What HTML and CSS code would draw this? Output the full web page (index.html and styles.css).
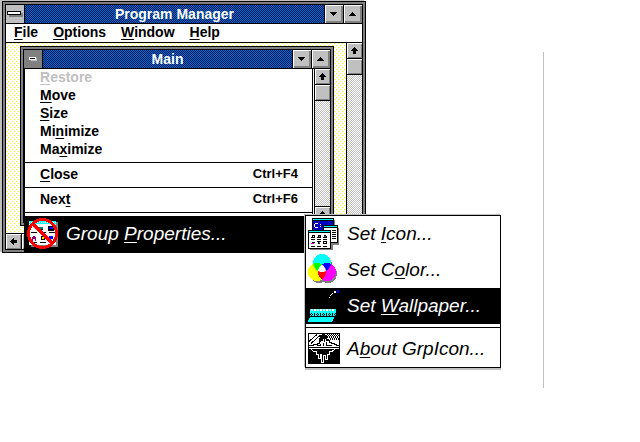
FILE: index.html
```
<!DOCTYPE html>
<html lang="en">
<head>
<meta charset="utf-8">
<title>Program Manager</title>
<link rel="stylesheet" href="styles.css">
</head>
<body>
<main class="desktop">
  <section class="window program-manager" aria-label="Program Manager">
    <div class="window-body">
      <header class="titlebar">
        <button class="control-box" aria-label="Control menu"><svg width="16" height="6" viewBox="0 0 16 6"><path fill="#808080" d="M2 2h14v4H2z"/><path d="M0 0h14v4H0z"/><path fill="#fff" d="M1 1h12v2H1z"/></svg></button>
        <h1 class="title">Program Manager</h1>
        <button class="size-button" aria-label="Minimize"><svg width="8" height="4" viewBox="0 0 8 4"><path d="M0 0h7v1H6v1H5v1H4v1H3V3H2V2H1V1H0z"/></svg></button>
        <button class="size-button" aria-label="Maximize"><svg width="8" height="4" viewBox="0 0 8 4"><path d="M0 4h7V3H6V2H5V1H4V0H3v1H2v1H1v1H0z"/></svg></button>
      </header>
      <nav class="menubar">
        <button><span><u>F</u>ile</span></button>
        <button><span><u>O</u>ptions</span></button>
        <button><span><u>W</u>indow</span></button>
        <button><span><u>H</u>elp</span></button>
      </nav>
      <div class="client">
        <div class="workspace">
          <section class="window group" aria-label="Main">
            <div class="window-body">
              <header class="titlebar">
                <button class="control-box pressed" aria-label="Group control menu"><svg width="8" height="4" viewBox="0 0 8 4"><path fill="#c0c0c0" d="M2 1h6v3H2z"/><path fill="#fff" d="M0 0h7v3H0z"/><path d="M1 1h5v1H1z"/></svg></button>
                <h2 class="title">Main</h2>
                <button class="size-button" aria-label="Minimize group"><svg width="8" height="4" viewBox="0 0 8 4"><path d="M0 0h7v1H6v1H5v1H4v1H3V3H2V2H1V1H0z"/></svg></button>
                <button class="size-button" aria-label="Maximize group"><svg width="8" height="4" viewBox="0 0 8 4"><path d="M0 4h7V3H6V2H5V1H4V0H3v1H2v1H1v1H0z"/></svg></button>
              </header>
              <div class="client">
                <div class="group-area"></div>
                <div class="scrollbar">
                  <button aria-label="Scroll group up"><svg width="7" height="7" viewBox="0 0 7 7"><path d="M3 0h1v1h1v1h1v1h1v1H5v3H2V4H0V3h1V2h1V1h1z"/></svg></button>
                  <button class="thumb" aria-label="Group scroll position"></button>
                  <button class="end" aria-label="Scroll group down"><svg width="7" height="7" viewBox="0 0 7 7"><path d="M3 0h1v1h1v1h1v1h1v1H5v3H2V4H0V3h1V2h1V1h1z"/></svg></button>
                </div>
                <div class="menu system-menu">
                  <button class="item" disabled><span><u>R</u>estore</span></button>
                  <button class="item"><span><u>M</u>ove</span></button>
                  <button class="item"><span><u>S</u>ize</span></button>
                  <button class="item"><span>Mi<u>n</u>imize</span></button>
                  <button class="item"><span>Ma<u>x</u>imize</span></button>
                  <hr>
                  <button class="item"><span><u>C</u>lose</span><kbd>Ctrl+F4</kbd></button>
                  <hr>
                  <button class="item"><span>Nex<u>t</u></span><kbd>Ctrl+F6</kbd></button>
                  <hr>
                  <button class="picture-item selected">
                    <svg width="32" height="32" viewBox="0 0 32 32">
                      <path fill="#808080" d="M4 4h27v25H4z"/>
                      <path fill="#fff" d="M2 3h27v24H2z"/>
                      <path fill="#00ffff" d="M2 3h27v3H2z"/>
                      <path stroke="#fff" stroke-dasharray="1 1" d="M2 4.500h27"/>
                      <path d="M13 9h3v3h-4v-1h1zM21 8h6v5h-6zM4 14h6v1H4zM13 14h6v1h-6zM22 14h6v1h-6zM4 24h6v1H4zM13 24h6v1h-6zM22 24h6v1h-6z"/>
                      <path fill="#008080" d="M12 9h4v2h-4z"/>
                      <path fill="#0000ff" d="M22 9h4v2h-4zM22 18h4v3h-4z"/>
                      <path fill="#800080" d="M6 18h2v1h1v4H8v-2H6v2H5v-4h1z"/>
                      <path d="M14 18h3v1h1v3h-4z"/>
                      <path fill="#ffff00" d="M15 19h2v2h-2z"/>
                      <g fill="none" stroke="#f00" stroke-width="3"><circle cx="15.500" cy="15.500" r="14"/><path d="M5.500 5.500l20 20"/></g>
                    </svg>
                    <span>Group <u>P</u>roperties...</span>
                  </button>
                  <div class="menu submenu">
                    <button class="picture-item">
                      <svg width="32" height="32" viewBox="0 0 32 32">
                        <path fill="#808080" d="M6 2h21v8H6zM17 10h14v17H17zM2 15h23v17H2z"/>
                        <path d="M4 0h22v14H4z"/><path fill="#0000c0" d="M5 3h20v11H5z"/><path fill="#00ffff" d="M5 1h20v1H5z"/>
                        <path fill="#fff" d="M7 5h3v1H7v3h3v1H7V9H6V6h1zM12 6h1v1h-1zM12 8h1v1h-1z"/>
                        <path d="M15 7h15v18H15z"/><path fill="#fff" d="M16 10h13v14H16z"/><path fill="#00ffff" d="M16 8h13v1H16z"/>
                        <path d="M24 12h4v1h-4zM18 12h5v1h-5zM24 14h4v1h-4zM24 16h4v1h-4zM24 18h4v1h-4zM24 20h4v1h-4z"/>
                        <path d="M0 12h23v19H0z"/><path fill="#fff" d="M1 15h21v15H1z"/><path fill="#00ffff" d="M1 13h21v1H1z"/>
                        <path d="M4 17h3v3H3v-1h1zM10 17h3v3H9v-1h1zM16 17h2v1h1v2h-4v-1h1zM3 21h4v1H3zM9 21h4v1H9zM15 21h4v1h-4zM4 24h3v1H4zM9 23h4v1H9zM10 24h2v2h-2zM15 23h4v3h-4zM3 28h4v1H3zM9 28h4v1H9zM15 28h4v1h-4z"/>
                        <path fill="#fff" d="M5 18h1v1H5zM16 24h2v1h-2z"/><path fill="#808080" d="M11 18h1v1h-1zM11 24h1v1h-1z"/><path fill="#008080" d="M16 18h2v1h-2z"/><path fill="#c000c0" d="M3 25h3v1H3z"/>
                      </svg>
                      <span>Set <u>I</u>con...</span>
                    </button>
                    <button class="picture-item">
                      <svg width="32" height="32" viewBox="0 0 32 32">
                        <defs>
                          <clipPath id="cyan-disc"><circle cx="14" cy="9" r="9"/></clipPath>
                          <clipPath id="yellow-disc"><circle cx="9" cy="18" r="9"/></clipPath>
                        </defs>
                        <g fill="#808080"><circle cx="15" cy="11" r="9"/><circle cx="11" cy="20" r="9"/><circle cx="20" cy="20" r="9"/></g>
                        <circle fill="#00ffff" cx="14" cy="9" r="9"/>
                        <circle fill="#ffff00" cx="9" cy="18" r="9"/>
                        <circle fill="#ff00ff" cx="19" cy="18" r="9"/>
                        <g clip-path="url(#cyan-disc)"><circle fill="#00ff00" cx="9" cy="18" r="9"/><circle fill="#0000ff" cx="19" cy="18" r="9"/></g>
                        <g clip-path="url(#yellow-disc)"><circle fill="#ff0000" cx="19" cy="18" r="9"/><g clip-path="url(#cyan-disc)"><circle fill="#fff" cx="19" cy="18" r="9"/></g></g>
                        <path fill="#fff" d="M12 12h4v2h1v3h-1v1h-4v-1h-1v-3h1z"/>
                      </svg>
                      <span>Set C<u>o</u>lor...</span>
                    </button>
                    <button class="picture-item selected">
                      <svg width="32" height="32" viewBox="0 0 32 32">
                        <path fill="#0000ff" d="M29 0h2v3h-2z"/>
                        <path fill="#fff" d="M26 1h2v2h-2zM24 3h1v1h-1zM23 4h1v1h-1zM22 5h1v1h-1zM21 7h1v1h-1z"/>
                        <path fill="#00ffff" d="M2 19h26v8H2zM2 27h24v2h-1v2h-1v1H0v-2h1v-2h1z"/>
                        <path stroke="#fff" stroke-width="2" stroke-dasharray="2 1" d="M3 20h24"/>
                        <path stroke="#000" stroke-dasharray="1 2" d="M3 23.500h25M3 25.500h25"/>
                        <path stroke="#000" stroke-dasharray="1 1" d="M2 24.500h26"/>
                        <path stroke="#000" d="M2 26.500h26"/>
                      </svg>
                      <span>Set <u>W</u>allpaper...</span>
                    </button>
                    <hr>
                    <button class="picture-item">
                      <svg width="32" height="32" viewBox="0 0 32 32">
                        <path d="M0 0h32v31H0z"/>
                        <path fill="#fff" d="M1 1h30v13H1z"/>
                        <path stroke="#000" stroke-dasharray="1 1" d="M18 2.500h13M19 4.500h12M22 6.500h9"/>
                        <path stroke="#000" stroke-dasharray="1 1" stroke-dashoffset="1" d="M18 1.500h13M18 3.500h13M21 5.500h10"/>
                        <path fill="none" stroke="#000" d="M1 8.500L9 1.500M3 10.500L12 2.500"/>
                        <path d="M14 0h3v2h2v4h2v2h-3V6h-1v3h-1V6h-1v2h-2v1h-2V5h1V2h2z"/>
                        <path fill="none" stroke="#000" d="M1 12.500h4v-1h4v-1h2V7.500M21 6.500v3h2v1h3v1h2v1h3M9 12.500h3v-2M15.500 13v-3M18.500 9v3h5"/>
                        <path fill="#fff" d="M1 15h30v1H1z"/>
                        <path fill="none" stroke="#fff" d="M3 16.500l3 2h2v3h2v4h2v-4h1v8h2v-7h2v4h2v-5h2v-3h3l4-3"/>
                      </svg>
                      <span>A<u>b</u>out GrpIcon...</span>
                    </button>
                  </div>
                </div>
              </div>
            </div>
          </section>
        </div>
        <div class="scrollbar">
          <button aria-label="Scroll up"><svg width="7" height="7" viewBox="0 0 7 7"><path d="M3 0h1v1h1v1h1v1h1v1H5v3H2V4H0V3h1V2h1V1h1z"/></svg></button>
          <button class="thumb" aria-label="Scroll position"></button>
        </div>
      </div>
      <div class="scrollbar horizontal">
        <button aria-label="Scroll left"><svg width="7" height="7" viewBox="0 0 7 7"><path d="M0 3h1V2h1V1h1V0h1v2h3v3H4v2H3V6H2V5H1V4H0z"/></svg></button>
        <button class="thumb" aria-label="Horizontal scroll position"></button>
      </div>
    </div>
  </section>
  <div class="page-rule"></div>
</main>
</body>
</html>
```
FILE: styles.css
```
* { box-sizing: border-box; }

body {
  margin: 0;
  background: #fff;
  color: #000;
  font: bold 14px/18px "Liberation Sans", Arial, sans-serif;
}

button {
  display: flex;
  align-items: center;
  margin: 0;
  padding: 0;
  border: 0;
  background: none;
  color: inherit;
  font: inherit;
  text-align: left;
}

svg {
  display: block;
  flex: none;
  shape-rendering: crispEdges;
}

u {
  text-decoration-thickness: 1px;
  text-underline-offset: 2px;
}

.desktop {
  position: relative;
  min-height: 100vh;
}

/* Window frames */
.window {
  position: absolute;
  display: flex;
  padding: 2px;
  border: 1px solid #000;
  background: #808080;
}

.program-manager {
  top: 1px;
  left: 2px;
  width: 364px;
  height: 252px;
  box-shadow: -2px -1px 0 #c0c0c0;
}

.group {
  top: 3px;
  left: 14px;
  width: 314px;
  height: 180px;
}

.window-body {
  display: flex;
  flex: 1;
  flex-direction: column;
  min-width: 0;
  border: 1px solid #000;
}

.titlebar {
  display: flex;
  height: 19px;
  flex: none;
  border-bottom: 1px solid #000;
  background: repeating-conic-gradient(#008080 0 25%, #0000a8 0 50%) 0 0 / 2px 2px;
  color: #fff;
}

.title {
  flex: 1;
  margin: 0;
  font: inherit;
  text-align: center;
}

.control-box,
.size-button {
  width: 19px;
  justify-content: center;
  background: #c0c0c0;
}

.control-box { border-right: 1px solid #000; }

.control-box.pressed { background: #808080; }

.size-button {
  border-left: 1px solid #000;
  box-shadow: inset 1px 1px 0 #fff, inset -2px -2px 0 #808080;
}

.menubar {
  display: flex;
  flex: none;
  gap: 15px;
  height: 19px;
  padding: 0 8px;
  border-bottom: 1px solid #000;
  background: #fff;
}

.menubar button { padding-bottom: 2px; }

.client {
  position: relative;
  display: flex;
  flex: 1;
  min-height: 0;
}

.workspace {
  position: relative;
  z-index: 1;
  flex: 1;
  background:
    conic-gradient(at 1px 1px, transparent 75%, #ff0 0) 0 0 / 4px 4px,
    conic-gradient(at 1px 1px, transparent 75%, #ff0 0) 2px 2px / 4px 4px,
    #fff;
}

.group-area {
  flex: 1;
  background: #fff;
}

/* Scroll bars */
.scrollbar {
  display: flex;
  flex: none;
  flex-direction: column;
  width: 16px;
  border-left: 1px solid #000;
  background: repeating-conic-gradient(#c0c0c0 0 25%, #fff 0 50%) 0 0 / 2px 2px;
}

.scrollbar button {
  justify-content: center;
  height: 16px;
  border-bottom: 1px solid #000;
  background: #c0c0c0;
  box-shadow: inset 1px 1px 0 #fff, inset -1px -1px 0 #808080;
}

.scrollbar .end {
  margin-top: auto;
  border-top: 1px solid #000;
  border-bottom: 0;
}

.scrollbar.horizontal {
  flex-direction: row;
  width: auto;
  height: 16px;
  border-top: 1px solid #000;
  border-left: 0;
}

.scrollbar.horizontal button {
  width: 16px;
  height: 15px;
  border-right: 1px solid #000;
  border-bottom: 0;
}

/* Menus */
.menu {
  position: absolute;
  border: 1px solid #000;
  background: #fff;
}

.system-menu {
  top: 0;
  left: 0;
  width: 289px;
  border-top: 0;
}

.submenu {
  bottom: -116px;
  left: 280px;
  width: 196px;
  box-shadow: -1px -1px 0 #c0c0c0, 0 2px 0 #c0c0c0;
}

.menu hr {
  height: 1px;
  margin: 3px 0;
  border: 0;
  background: #000;
}

.item {
  justify-content: space-between;
  width: 100%;
  height: 18px;
  padding: 0 14px 2px 15px;
}

.item:disabled { color: #c0c0c0; }

.item kbd {
  font: inherit;
  font-size: 13px;
}

.picture-item {
  gap: 7px;
  width: 100%;
  height: 36px;
  padding: 0 2px;
  font: italic 19px/24px "Liberation Sans", Arial, sans-serif;
  white-space: nowrap;
}

.selected {
  background: #000;
  color: #fff;
}

.page-rule {
  position: absolute;
  top: 52px;
  left: 543px;
  height: 336px;
  border-left: 1px solid #c0c0c0;
}
```
